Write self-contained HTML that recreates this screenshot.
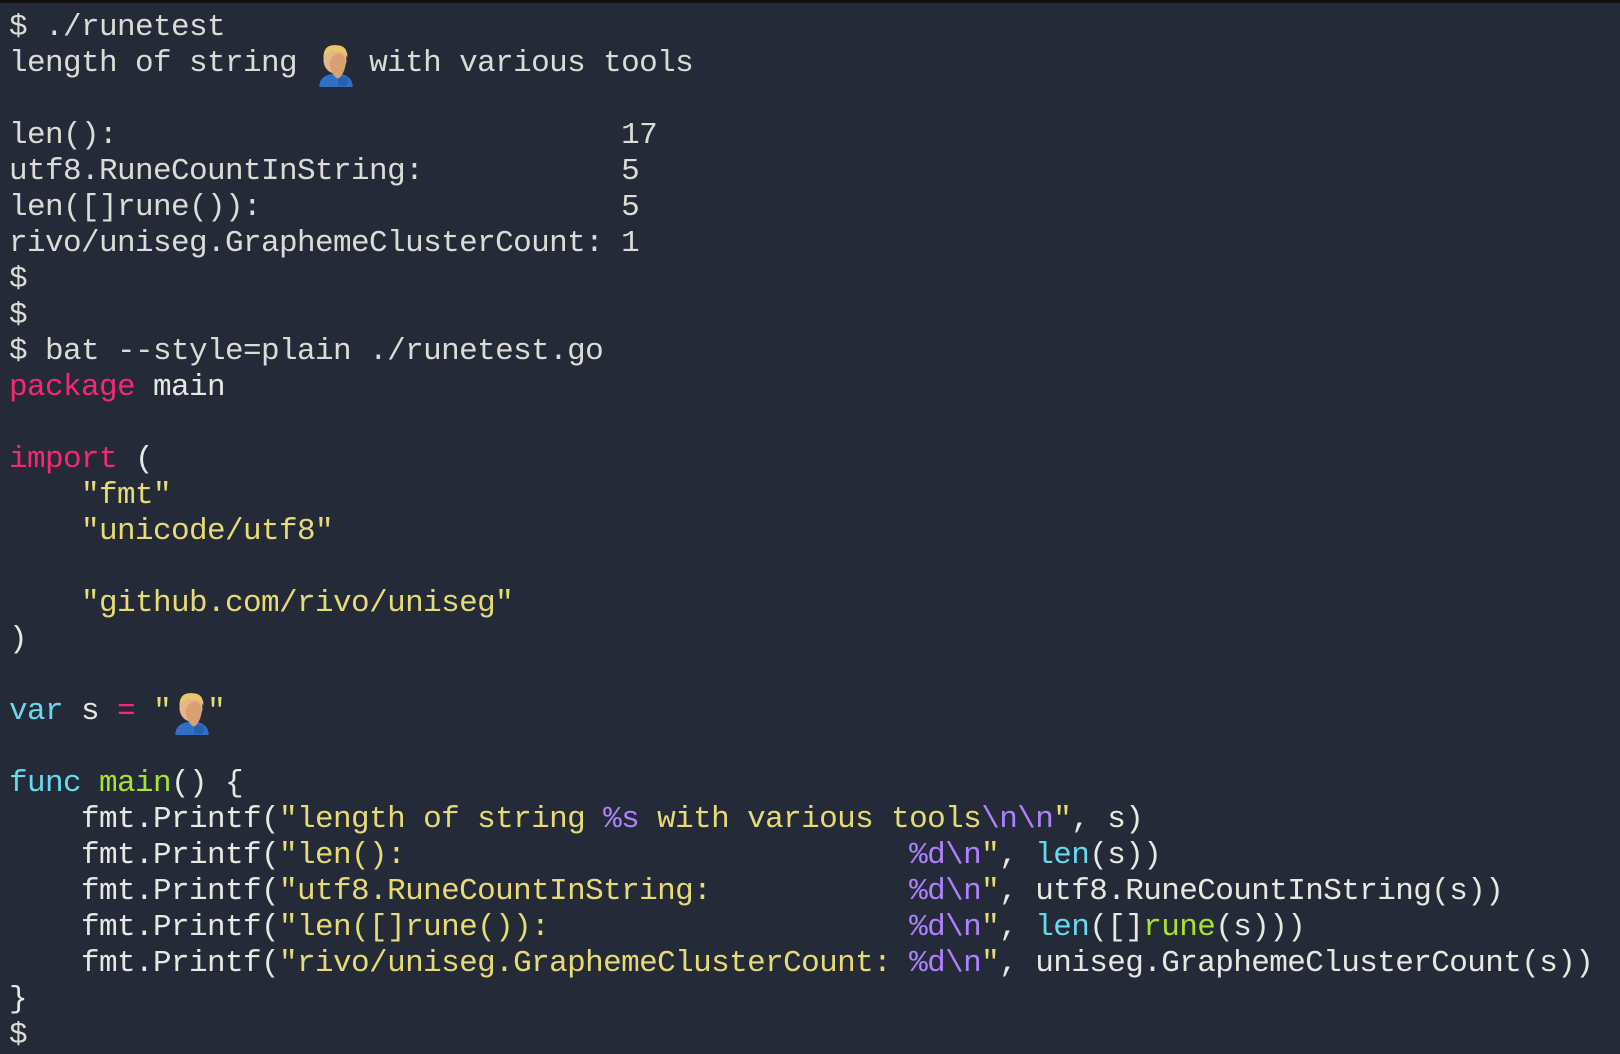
<!DOCTYPE html>
<html><head><meta charset="utf-8"><style>
html,body{margin:0;padding:0;}
body{width:1620px;height:1034px;overflow:hidden;background:#252a38;border-top:3px solid #111;box-sizing:border-box;}
pre{margin:0;padding:7px 0 0 9px;font-family:"Liberation Mono",monospace;font-size:31px;letter-spacing:-0.6px;line-height:36px;color:#e8e8e2;white-space:pre;}
.o{color:#dcdcd6}
.k{color:#f92672}.s{color:#e6db74}.c{color:#66d9ef}.g{color:#a6e22e}.p{color:#ae81ff}
.e{display:inline-block;width:36px;height:36px;vertical-align:top;position:relative;}
.e svg{position:absolute;left:-1px;top:-5px;width:44px;height:46px;}
</style></head><body><pre><span class="o">$ ./runetest
length of string <span class="e"><svg viewBox="0 0 40 44"><path d="M4 44 Q4 32 20 31 Q36 32 36 44Z" fill="#2f6fc4"/><ellipse cx="19" cy="18" rx="11" ry="13" fill="#e8b48a"/><path d="M8 16 Q8 3 20 4 Q31 4 31 16 Q27 9 20 10 Q13 9 8 16Z" fill="#e8c86a"/><path d="M14 22 Q16 12 24 12 Q30 14 29 24 Q27 33 22 36 Q16 34 14 22Z" fill="#d9a070"/><path d="M22 36 Q30 32 32 38 L30 43 L22 43Z" fill="#2a5fae"/></svg></span> with various tools

len():                            17
utf8.RuneCountInString:           5
len([]rune()):                    5
rivo/uniseg.GraphemeClusterCount: 1
$
$
$ bat --style=plain ./runetest.go</span>
<span class="k">package</span> main

<span class="k">import</span> (
    <span class="s">"fmt"</span>
    <span class="s">"unicode/utf8"</span>

    <span class="s">"github.com/rivo/uniseg"</span>
)

<span class="c">var</span> s <span class="k">=</span> <span class="s">"<span class="e"><svg viewBox="0 0 40 44"><path d="M4 44 Q4 32 20 31 Q36 32 36 44Z" fill="#2f6fc4"/><ellipse cx="19" cy="18" rx="11" ry="13" fill="#e8b48a"/><path d="M8 16 Q8 3 20 4 Q31 4 31 16 Q27 9 20 10 Q13 9 8 16Z" fill="#e8c86a"/><path d="M14 22 Q16 12 24 12 Q30 14 29 24 Q27 33 22 36 Q16 34 14 22Z" fill="#d9a070"/><path d="M22 36 Q30 32 32 38 L30 43 L22 43Z" fill="#2a5fae"/></svg></span>"</span>

<span class="c">func</span> <span class="g">main</span>() {
    fmt.Printf(<span class="s">"length of string </span><span class="p">%s</span><span class="s"> with various tools</span><span class="p">\n\n</span><span class="s">"</span>, s)
    fmt.Printf(<span class="s">"len():                            </span><span class="p">%d\n</span><span class="s">"</span>, <span class="c">len</span>(s))
    fmt.Printf(<span class="s">"utf8.RuneCountInString:           </span><span class="p">%d\n</span><span class="s">"</span>, utf8.RuneCountInString(s))
    fmt.Printf(<span class="s">"len([]rune()):                    </span><span class="p">%d\n</span><span class="s">"</span>, <span class="c">len</span>([]<span class="g">rune</span>(s)))
    fmt.Printf(<span class="s">"rivo/uniseg.GraphemeClusterCount: </span><span class="p">%d\n</span><span class="s">"</span>, uniseg.GraphemeClusterCount(s))
}
<span class="o">$</span></pre></body></html>
